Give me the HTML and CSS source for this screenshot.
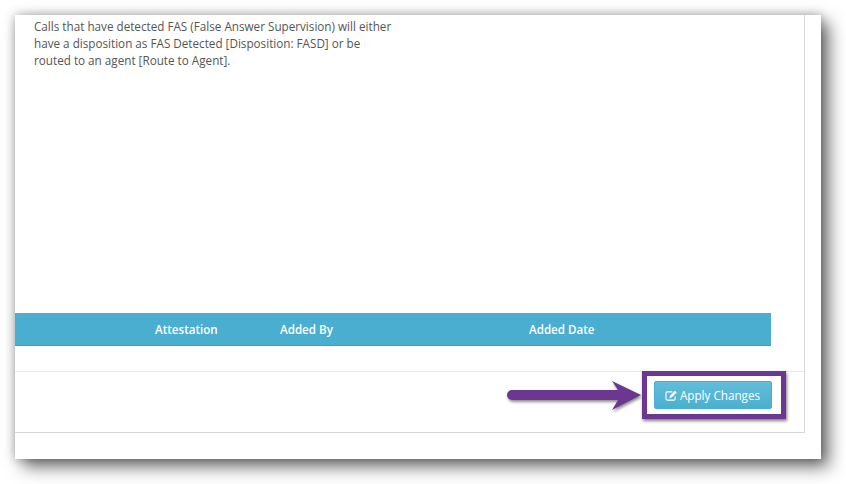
FILE: index.html
```html
<!DOCTYPE html>
<html lang="en">
<head>
	<meta charset="UTF-8">
	<title>Apply Changes</title>
	<link rel="stylesheet" href="styles.css">
</head>
<body>
	<div class="sheet">
		<div class="panel">
			<div class="content">
				<p class="note">Calls that have detected FAS (False Answer Supervision) will either have a disposition as FAS Detected [Disposition: FASD] or be routed to an agent [Route to Agent].</p>
				<div class="table-head">
					<span class="col-attest">Attestation</span>
					<span class="col-by">Added By</span>
					<span class="col-date">Added Date</span>
				</div>
				<div class="table-empty"></div>
			</div>
			<div class="footer">
				<button class="btn" type="button">
					<svg class="btn-icon" viewBox="0 0 14 12" width="13" height="11">
						<path d="M11 7v2.600A1.400 1.400 0 0 1 9.600 11H2.400A1.400 1.400 0 0 1 1 9.600V3.400A1.400 1.400 0 0 1 2.400 2H8" fill="none" stroke="currentColor" stroke-width="1.200"/>
						<path d="M5.500 6.300 10.800 1l1.700 1.700L7.200 8 5 8.500z" fill="currentColor" stroke="currentColor" stroke-width=".5"/>
					</svg>
					Apply Changes
				</button>
			</div>
		</div>
		<div class="highlight"></div>
		<svg class="arrow" viewBox="0 0 140 34" width="140" height="34">
			<path d="M5 12H111L105 3 134 17 105 32 111 22H5A5 5 0 0 1 5 12Z" fill="#6c3791"/>
		</svg>
	</div>
</body>
</html>
```

FILE: styles.css
```css
html,body{
	margin:0;
	padding:0;
	background:#fff;
}
body{
	height:484px;
	overflow:hidden;
	font-family:"Open Sans",sans-serif;
}
.sheet{
	position:relative;
	width:806px;
	height:444px;
	margin:15px 0 0 15px;
	background:#fff;
	box-shadow:0 0 10px rgba(0,0,0,.3),8px 8px 16px rgba(0,0,0,.55);
}
.panel{
	width:789px;
	height:417px;
	display:flex;
	flex-direction:column;
	background:#fff;
	border-right:1px solid #d8d8d8;
	border-bottom:1px solid #d8d8d8;
}
.content{
	flex:1;
	display:flex;
	flex-direction:column;
}
.note{
	flex:1;
	width:360px;
	margin:0;
	padding:3px 0 0 19px;
	font-size:11.700px;
	line-height:17px;
	color:#555;
}
.table-head{
	display:flex;
	width:756px;
	height:32px;
	align-items:center;
	background:#4aaed0;
	border-bottom:1px solid #419ebf;
	color:#fff;
	font-size:11.600px;
	font-weight:600;
}
.col-attest{
	margin-left:140px;
	width:125px;
}
.col-by{
	width:249px;
}
.table-empty{
	height:25px;
}
.footer{
	display:flex;
	justify-content:flex-end;
	height:61px;
	box-sizing:border-box;
	padding:9px 32px 0 0;
	border-top:1px solid #e8e8e8;
}
.btn{
	display:flex;
	align-items:center;
	justify-content:center;
	gap:2px;
	width:118px;
	height:28px;
	padding:0 1px 0 0;
	border:1px solid #46b0d0;
	border-radius:2px;
	background:linear-gradient(#62bdd9,#4cafd0);
	color:#fff;
	font-family:inherit;
	font-size:11.700px;
}
.highlight{
	position:absolute;
	left:627px;
	top:356px;
	width:134px;
	height:38px;
	border:5px solid #6c3791;
	box-shadow:1px 2px 3px rgba(0,0,0,.5);
}
.arrow{
	position:absolute;
	left:492px;
	top:363px;
	filter:drop-shadow(1px 2px 1.500px rgba(0,0,0,.45));
}
```
